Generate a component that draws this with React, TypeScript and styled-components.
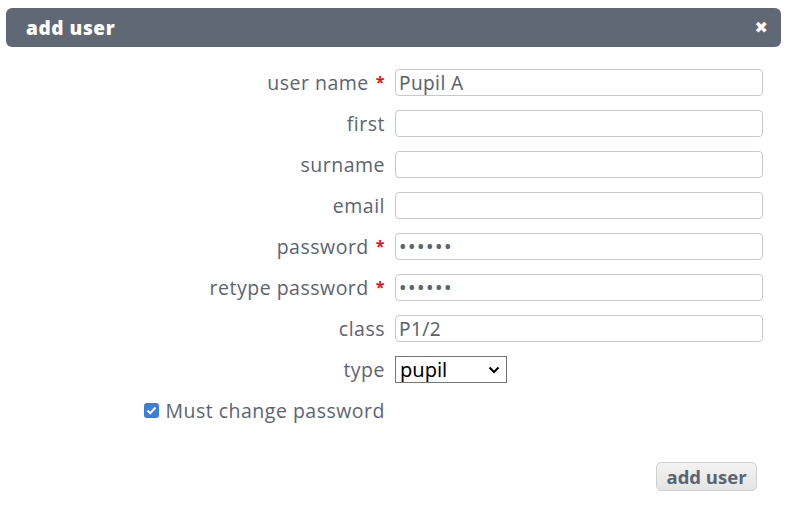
import React from "react";
import styled, { createGlobalStyle } from "styled-components";

const Global = createGlobalStyle`
  html, body { margin: 0; padding: 0; background: #fff; }
  body { font-family: "Open Sans", "Noto Sans", sans-serif; }
`;

const Dialog = styled.div`
  width: 785px;
  height: 510px;
  box-sizing: border-box;
  padding: 8px 4px 0 6px;
  display: flex;
  flex-direction: column;
`;

const TitleBar = styled.div`
  height: 39px;
  background: #5f6874;
  border-radius: 6px;
  display: flex;
  align-items: center;
  justify-content: space-between;
  padding: 0 13px 0 20px;
  color: #fff;
`;

const Title = styled.span`
  font-family: "Open Sans", sans-serif;
  font-weight: 800;
  font-size: 19px;
  letter-spacing: 0.6px;
`;

const Close = styled.span`
  font-family: "DejaVu Sans", sans-serif;
  font-weight: bold;
  font-size: 16px;
  line-height: 1;
`;

const Form = styled.div`
  display: grid;
  grid-template-columns: 379px 368px;
  column-gap: 10px;
  row-gap: 14px;
  grid-auto-rows: 27px;
  margin-top: 22px;
`;

const Label = styled.label`
  display: flex;
  align-items: center;
  justify-content: flex-end;
  font-size: 19.5px;
  letter-spacing: 0.5px;
  color: #5b6471;
  white-space: nowrap;
`;

const Star = styled.span`
  color: #e3111b;
  font-weight: bold;
  font-size: 16px;
  margin-left: 7px;
  align-self: flex-start;
  margin-top: 2px;
`;

const TextInput = styled.input`
  box-sizing: border-box;
  height: 27px;
  width: 368px;
  border: 1px solid #c9c9c9;
  border-radius: 4px;
  padding: 0 3px;
  font-family: "Noto Sans", "Open Sans", sans-serif;
  font-size: 19px;
  letter-spacing: 0.4px;
  color: #5b6471;
  outline: none;
  &[type="password"] {
    font-size: 20px;
    letter-spacing: 1.5px;
  }
`;

const SelectBox = styled.div`
  position: relative;
  width: 112px;
  height: 27px;
  box-sizing: border-box;
  border: 1px solid #767676;
  display: flex;
  align-items: center;
  padding-left: 4px;
  font-family: "Noto Sans", sans-serif;
  font-size: 20px;
  color: #000;
`;

const Chevron = styled.svg`
  position: absolute;
  right: 6px;
  top: 9px;
`;

const CheckLabel = styled.label`
  display: flex;
  align-items: center;
  justify-content: flex-end;
  gap: 6px;
  font-size: 19.5px;
  letter-spacing: 0.5px;
  color: #5b6471;
`;

const CheckBox = styled.span`
  width: 15px;
  height: 15px;
  border-radius: 3px;
  background: #3b7ddd;
  display: inline-flex;
  align-items: center;
  justify-content: center;
`;

const Footer = styled.div`
  display: flex;
  justify-content: flex-end;
  padding-right: 24px;
  margin-top: 38px;
`;

const Button = styled.button`
  height: 29px;
  padding: 0;
  width: 101px;
  border: 1px solid #cfcfcf;
  border-radius: 5px;
  background: linear-gradient(#f3f3f3, #e4e4e4);
  font-family: "Open Sans", sans-serif;
  font-weight: 700;
  font-size: 18.5px;
  color: #5b6471;
`;

const fields: { label: string; required?: boolean; value?: string; type?: string }[] = [
  { label: "user name", required: true, value: "Pupil A" },
  { label: "first" },
  { label: "surname" },
  { label: "email" },
  { label: "password", required: true, value: "123456", type: "password" },
  { label: "retype password", required: true, value: "123456", type: "password" },
  { label: "class", value: "P1/2" },
];

export default function App() {
  return (
    <>
      <Global />
      <Dialog>
        <TitleBar>
          <Title>add user</Title>
          <Close>✖</Close>
        </TitleBar>
        <Form>
          {fields.map((f) => (
            <React.Fragment key={f.label}>
              <Label>
                {f.label}
                {f.required && <Star>*</Star>}
              </Label>
              <TextInput type={f.type || "text"} defaultValue={f.value || ""} readOnly />
            </React.Fragment>
          ))}
          <Label>type</Label>
          <SelectBox>
            pupil
            <Chevron width="12" height="8" viewBox="0 0 12 8">
              <path d="M1.5 1.5 L6 6 L10.5 1.5" fill="none" stroke="#000" strokeWidth="2" />
            </Chevron>
          </SelectBox>
          <CheckLabel>
            <CheckBox>
              <svg width="11" height="9" viewBox="0 0 11 9">
                <path d="M1.5 4.5 L4.2 7.2 L9.5 1.5" fill="none" stroke="#fff" strokeWidth="2" />
              </svg>
            </CheckBox>
            Must change password
          </CheckLabel>
          <div />
        </Form>
        <Footer>
          <Button>add user</Button>
        </Footer>
      </Dialog>
    </>
  );
}
